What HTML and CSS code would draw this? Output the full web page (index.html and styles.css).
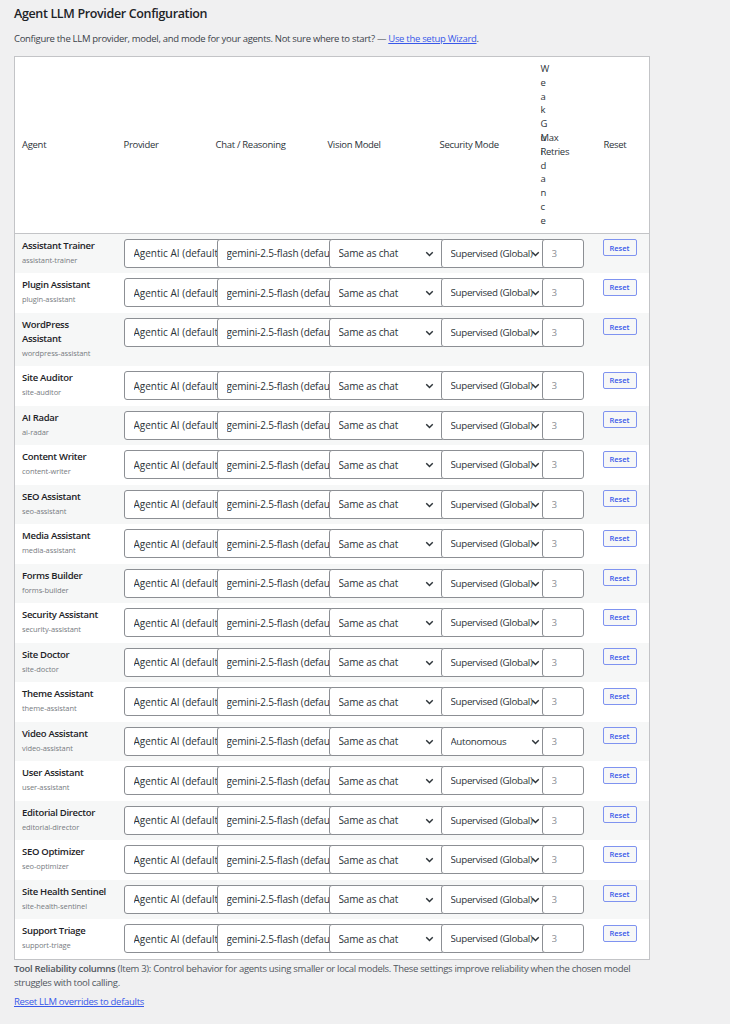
FILE: index.html
```html
<!DOCTYPE html>
<html lang="en">
<head>
<meta charset="utf-8">
<title>Agent LLM Provider Configuration</title>
<link rel="stylesheet" href="styles.css">
</head>
<body>
<div class="wrap">
  <h2 class="title">Agent LLM Provider Configuration</h2>
  <p class="intro">Configure the LLM provider, model, and mode for your agents. Not sure where to start? — <a href="#">Use the setup Wizard</a>.</p>
  <table class="agents">
    <colgroup>
      <col class="c-agent"><col class="c-prov"><col class="c-chat"><col class="c-vision"><col class="c-sec"><col class="c-weak"><col class="c-retry"><col class="c-reset">
    </colgroup>
    <thead>
      <tr>
        <th>Agent</th><th>Provider</th><th>Chat / Reasoning</th><th>Vision Model</th><th>Security Mode</th><th class="weak">Weak Guidance</th><th class="retry">Max Retries</th><th class="reset-h">Reset</th>
      </tr>
    </thead>
    <tbody id="rows"></tbody>
  </table>
  <p class="note"><strong>Tool Reliability columns</strong> (Item 3): Control behavior for agents using smaller or local models. These settings improve reliability when the chosen model struggles with tool calling.</p>
  <p class="reset-all"><a href="#">Reset LLM overrides to defaults</a></p>
</div>
<script src="app.js"></script>
</body>
</html>
```

FILE: app.js
```js
const agents = [
  ["Assistant Trainer","assistant-trainer"],
  ["Plugin Assistant","plugin-assistant"],
  ["WordPress Assistant","wordpress-assistant"],
  ["Site Auditor","site-auditor"],
  ["AI Radar","ai-radar"],
  ["Content Writer","content-writer"],
  ["SEO Assistant","seo-assistant"],
  ["Media Assistant","media-assistant"],
  ["Forms Builder","forms-builder"],
  ["Security Assistant","security-assistant"],
  ["Site Doctor","site-doctor"],
  ["Theme Assistant","theme-assistant"],
  ["Video Assistant","video-assistant"],
  ["User Assistant","user-assistant"],
  ["Editorial Director","editorial-director"],
  ["SEO Optimizer","seo-optimizer"],
  ["Site Health Sentinel","site-health-sentinel"],
  ["Support Triage","support-triage"]
];
const tbody = document.getElementById("rows");
tbody.innerHTML = agents.map(([name, slug]) => {
  const mode = slug === "video-assistant" ? "Autonomous" : "Supervised (Global)";
  return `<tr>
    <td class="agent"><div class="name">${name}</div><div class="slug">${slug}</div></td>
    <td class="ctl"><select class="sel sel-prov"><option>Agentic AI (default)</option></select></td>
    <td class="ctl"><select class="sel sel-chat"><option>gemini-2.5-flash (default)</option></select></td>
    <td class="ctl"><select class="sel sel-vision"><option>Same as chat</option></select></td>
    <td class="ctl"><select class="sel sel-sec"><option>${mode}</option></select></td>
    <td class="weak"><span class="chk"></span></td>
    <td class="retry"><input class="num" type="number" value="3"></td>
    <td class="reset-c"><button class="btn" type="button">Reset</button></td>
  </tr>`;
}).join("");
```

FILE: styles.css
```css
html, body { margin: 0; padding: 0; }
body {
  background: #f0f0f1;
  color: #3c434a;
  font-family: "Open Sans", "Noto Sans", sans-serif;
  font-size: 9.5px;
  letter-spacing: -0.3px;
  line-height: 1.4;
}
.wrap { padding: 0 0 0 14px; width: 716px; }
.title {
  margin: 0;
  padding-top: 5px;
  font-size: 12.5px;
  letter-spacing: -0.35px;
  line-height: 18px;
  font-weight: 600;
  color: #1d2327;
}
.intro { margin: 9px 0 0; line-height: 14px; }
a { color: #3858e9; }
.agents {
  margin-top: 10px;
  width: 636px;
  border: 1px solid #c3c4c7;
  border-collapse: collapse;
  table-layout: fixed;
  background: #fff;
}
.c-agent { width: 102px; }
.c-prov { width: 92px; }
.c-chat { width: 112px; }
.c-vision { width: 112px; }
.c-sec { width: 101px; }
.c-weak { width: 7px; }
.c-retry { width: 50px; }
.c-reset { width: auto; }
th {
  text-align: left;
  font-weight: 400;
  color: #2c3338;
  line-height: 13.8px;
  padding: 5px 0 5px 7px;
  vertical-align: middle;
  border-bottom: 1px solid #c3c4c7;
}
th.weak { padding: 5px 0 5px 7px; word-break: break-all; }
th.retry { padding: 5px 6px 5px 0; }
th.reset-h { padding-left: 13px; }
tbody tr:nth-child(odd) { background: #f6f7f7; }
td {
  padding: 5px 0 5.5px 7px;
  vertical-align: top;
  white-space: nowrap;
}
td.ctl, td.retry { line-height: 0; font-size: 0; }
td.agent { white-space: normal; padding-right: 8px; }
.name { font-weight: 600; color: #1d2327; line-height: 14px; }
.slug { font-size: 7.5px; letter-spacing: -0.1px; color: #787c82; line-height: 12px; margin-top: 1px; padding-bottom: 2px; }
.sel {
  -webkit-appearance: none;
  appearance: none;
  display: inline-block;
  vertical-align: top;
  height: 29px;
  margin: 0 0 0 1px;
  padding: 0 14px 0 9px;
  border: 1px solid #8c8f94;
  border-radius: 3px;
  background: #fff url("data:image/svg+xml;charset=utf-8,%3Csvg xmlns='http://www.w3.org/2000/svg' width='20' height='20' viewBox='0 0 20 20'%3E%3Cpath d='M5 8l5 5 5-5' fill='none' stroke='%232c3338' stroke-width='2.2'/%3E%3C/svg%3E") no-repeat right 8px center / 13px 13px;
  color: #2c3338;
  font-family: "Open Sans", "Noto Sans", sans-serif;
  font-size: 10px;
  letter-spacing: -0.15px;
  line-height: normal;
  box-sizing: border-box;
}
.sel-prov { width: 130px; margin-left: 0; letter-spacing: 0; }
.sel-chat { width: 140px; }
.sel-vision { width: 116px; }
.sel-sec { width: 110px; padding-right: 4px; font-size: 9.75px; letter-spacing: -0.3px; }
td.weak { padding-left: 7px; }
.chk {
  display: block;
  width: 1.5px;
  height: 7px;
  margin-top: 1px;
  background: #3858e9;
}
td.retry { padding-left: 1px; }
.num {
  display: inline-block;
  vertical-align: top;
  width: 42px;
  height: 29px;
  box-sizing: border-box;
  border: 1px solid #8c8f94;
  border-radius: 3px;
  padding: 0 0 0 9px;
  font-family: "Open Sans", "Noto Sans", sans-serif;
  font-size: 9.75px;
  line-height: normal;
  color: #8c8f94;
  background: #fff;
}
.num::-webkit-inner-spin-button, .num::-webkit-outer-spin-button { -webkit-appearance: none; margin: 0; }
td.reset-c { padding: 5.5px 0 0 12px; }
.btn {
  display: block;
  height: 17px;
  width: 34px;
  padding: 0;
  border: 1px solid #7f93f0;
  border-radius: 2px;
  background: #f6f7f7;
  color: #3858e9;
  font-family: inherit;
  font-size: 7.5px;
  letter-spacing: 0;
  font-weight: 600;
}
.note { margin: 2px 0 0; line-height: 14px; color: #50575e; width: 640px; }
.note strong { font-weight: 600; }
.reset-all { margin: 5px 0 0; line-height: 14px; }
```
